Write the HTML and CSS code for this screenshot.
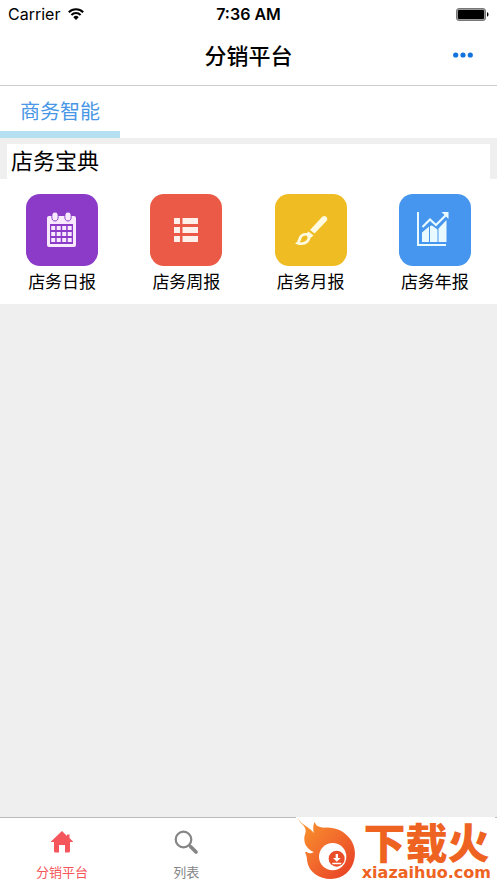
FILE: index.html
```html
<!DOCTYPE html>
<html lang="zh-CN">
<head>
<meta charset="utf-8">
<meta name="viewport" content="width=device-width, initial-scale=1">
<title>分销平台</title>
<link rel="stylesheet" href="styles.css">
</head>
<body>
<header class="top">
  <div class="status">
    <div class="carrier">
      <span>Carrier</span>
      <svg width="16" height="12" viewBox="0 0 16 12" fill="none" stroke="#000" stroke-width="2" aria-hidden="true">
        <path d="M.8 4.3a10.2 10.2 0 0 1 14.4 0M3.4 7a6.5 6.5 0 0 1 9.2 0"/>
        <path d="M8 12 5.3 9.2a3.8 3.8 0 0 1 5.4 0z" fill="#000" stroke="none"/>
      </svg>
    </div>
    <time class="clock">7:36 AM</time>
    <svg class="battery" width="33" height="13" viewBox="0 0 33 13" aria-hidden="true">
      <rect x=".5" y=".5" width="29" height="12" rx="2.5" fill="#999" stroke="#777"/>
      <rect x="2" y="2" width="26" height="9" rx="1"/>
      <path d="M31 4.3c2 .6 2 3.800 0 4.400z"/>
    </svg>
  </div>
  <div class="nav">
    <h1>分销平台</h1>
    <button class="more" type="button" aria-label="更多">
      <svg width="20" height="6" viewBox="0 0 20 6" fill="#1273de" aria-hidden="true"><circle cx="2.700" cy="3" r="2.600"/><circle cx="10" cy="3" r="2.600"/><circle cx="17.300" cy="3" r="2.600"/></svg>
    </button>
  </div>
</header>
<nav class="tabs"><a class="tab" href="#bi">商务智能</a></nav>
<main id="bi">
  <h2>店务宝典</h2>
  <div class="grid">
    <a class="app" href="#day">
      <span class="tile purple">
        <svg width="72" height="72" viewBox="0 0 72 72" aria-hidden="true">
          <rect x="21" y="22" width="29" height="31" rx="2" fill="#f8e9ff"/>
          <rect x="24" y="30" width="23" height="20" fill="#8b3bc8"/>
          <g fill="#f8e9ff" stroke="#8b3bc8"><ellipse cx="29" cy="22.500" rx="3.200" ry="4.500"/><ellipse cx="42" cy="22.500" rx="3.200" ry="4.500"/></g>
          <path d="M25.200 34h20.600M25.200 40h20.600M25.200 46h20.600" stroke="#f8e9ff" stroke-width="4" stroke-dasharray="4 1.500"/>
        </svg>
      </span>
      <span>店务日报</span>
    </a>
    <a class="app" href="#week">
      <span class="tile red">
        <svg width="72" height="72" viewBox="0 0 72 72" fill="#fff0e9" aria-hidden="true">
          <path d="M24 24h6v6h-6zM32.500 24H48v6H32.500zM24 33h6v6h-6zM32.500 33H48v6H32.500zM24 42h6v6h-6zM32.500 42H48v6H32.500z"/>
        </svg>
      </span>
      <span>店务周报</span>
    </a>
    <a class="app" href="#month">
      <span class="tile yellow">
        <svg width="72" height="72" viewBox="0 0 72 72" fill="#fffbe0" aria-hidden="true">
          <path d="M35 36 47 23c3-3 7 1 4.500 4L39.500 39.500z"/>
          <path d="m33.500 37.500 5 4-3 2.500c-1 4-4 7-9 7-3 0-5.500-.5-6.500-2 3-.5 2.500-3 4-6 1.500-3.500 5-4.500 8-4z"/>
          <path d="M31.500 41.500c-3.500 0-4.800 1.500-5.300 3.700-.3 1.600-1 2.300-2 3.100 5 .5 8-1.800 8.500-4.800z" fill="#f0bc23"/>
        </svg>
      </span>
      <span>店务月报</span>
    </a>
    <a class="app" href="#year">
      <span class="tile blue">
        <svg width="72" height="72" viewBox="0 0 72 72" fill="#e8faff" aria-hidden="true">
          <path d="M18 18h2v32h27v2H18z"/>
          <path d="M23 38.500 30 32.500V48h-7zM31 32l2-.5 5.500 4V48h-7.500zM39.500 34.500 47.500 26v22h-8z"/>
          <path d="m23.500 33 7.500-7.500 6 5.500L47 21" fill="none" stroke="#e8faff" stroke-width="2.200"/>
          <path d="M42.500 18H49.500v7z"/>
        </svg>
      </span>
      <span>店务年报</span>
    </a>
  </div>
</main>
<footer class="bottom">
  <a class="item active" href="#home">
    <svg width="24" height="24" viewBox="0 0 24 24" fill="#f4565b" aria-hidden="true"><path d="M12 1 1 11.500V12h3v9Q4 22.500 5.500 22.500H9V15h6v7.500h3.500q1.500 0 1.500-1.500v-9h3v-.5L19.500 8V4.500h-2.500V6z"/></svg>
    <span>分销平台</span>
  </a>
  <a class="item" href="#list">
    <svg width="24" height="24" viewBox="0 0 24 24" fill="none" stroke="#858585" aria-hidden="true"><circle cx="9.500" cy="9.500" r="7.800" stroke-width="2.200"/><path d="m15 15 1.500 1.500" stroke-width="2.500"/><path d="m17 17 5 5" stroke-width="3.600" stroke-linecap="round"/></svg>
    <span>列表</span>
  </a>
  <div class="brand">
    <svg class="flame" width="62" height="64" viewBox="9 16 186 192" aria-hidden="true">
      <defs><linearGradient id="fire" x1="0" y1="0" x2="1" y2="1"><stop offset="0" stop-color="#f99a2d"/><stop offset=".5" stop-color="#f26b2c"/><stop offset="1" stop-color="#e63b25"/></linearGradient></defs>
      <path fill="url(#fire)" d="M15 20C22 34 36 41 49 51 62 60 67 69 65 75 61 59 58 45 65 30 68 43 79 47 95 48 123 46 151 56 170 80 184 98 189 121 184 143 177 178 149 202 114 202 78 202 48 181 43 151 41 139 42 133 36 122L40 120C48 126 56 126 62 121 49 115 35 103 34 85 33 67 43 61 35 47 29 37 18 31 15 20z"/>
      <circle cx="119" cy="135" r="41" fill="#fff"/>
      <circle cx="131" cy="141" r="24" fill="#ea4e29"/>
      <path d="M128 127h7v12h8l-11.500 11L120 139h8zM118 153h27v5h-27z" fill="#fff"/>
    </svg>
    <div class="words"><strong>下载火</strong><span>xiazaihuo.com</span></div>
  </div>
</footer>
</body>
</html>
```
FILE: styles.css
```css
* { box-sizing: border-box; }

body {
  margin: 0;
  min-height: 100vh;
  display: flex;
  flex-direction: column;
  background: #efefef;
  color: #000;
  font-family: "Liberation Sans", "Noto Sans CJK SC", sans-serif;
}

a { color: inherit; text-decoration: none; }
svg { display: block; }
h1, h2 { margin: 0; }

.top { background: #fff; border-bottom: 1px solid #ccc; }

.status {
  display: grid;
  grid-template-columns: 1fr auto 1fr;
  align-items: center;
  height: 28px;
  padding: 0 8px;
  font-family: Inter, sans-serif;
  font-size: 16px;
}
.carrier { display: flex; align-items: center; gap: 8px; }
.clock { font-weight: 600; }
.battery { justify-self: end; }

.nav {
  display: grid;
  grid-template-columns: 1fr auto 1fr;
  align-items: center;
  height: 57px;
  padding: 0 16px;
}
.nav h1 {
  grid-column: 2;
  font-size: 22px;
  line-height: 32px;
  font-weight: 500;
}
.more {
  justify-self: end;
  padding: 4px 8px 8px;
  border: 0;
  background: none;
}

.tabs { display: flex; background: #fff; }
.tab {
  padding: 10px 20px 3px;
  border-bottom: 7px solid #b5e0f2;
  color: #4897e6;
  font-size: 20px;
  line-height: 32px;
}

main { flex: 1; padding-top: 6px; }
h2 {
  margin: 0 7px;
  padding: 0 4px;
  background: #fff;
  font-size: 22px;
  line-height: 35px;
  font-weight: 400;
}
.grid {
  display: grid;
  grid-template-columns: repeat(4, 1fr);
  padding: 15px 0 8px;
  background: #fff;
}
.app {
  display: flex;
  flex-direction: column;
  align-items: center;
  gap: 4px;
  font-size: 17px;
  line-height: 26px;
}
.tile { border-radius: 14px; }
.purple { background: #8b3bc8; }
.red { background: #eb5a46; }
.yellow { background: #f0bc23; }
.blue { background: #4695ee; }

.bottom {
  position: relative;
  display: grid;
  grid-template-columns: repeat(4, 1fr);
  border-top: 1px solid #bbb;
  background: #fff;
}
.item {
  display: flex;
  flex-direction: column;
  align-items: center;
  gap: 9px;
  padding: 12px 0 0;
  color: #858585;
  font-size: 13px;
  line-height: 20px;
}
.active { color: #f4565b; }

.brand {
  position: absolute;
  right: 2px;
  bottom: 0;
  display: flex;
  height: 66px;
  padding: 0 4px 0 0;
  background: #fff;
}
.words {
  display: flex;
  flex-direction: column;
  align-items: center;
  padding-top: 2px;
  color: #ee6322;
}
.flame { margin-right: 4px; }
.words strong {
  font-family: "Noto Sans CJK SC", sans-serif;
  font-size: 42px;
  line-height: 44px;
  font-weight: 900;
}
.words span {
  font-family: "DejaVu Sans", sans-serif;
  font-size: 16px;
  line-height: 20px;
  font-weight: 700;
}
```
